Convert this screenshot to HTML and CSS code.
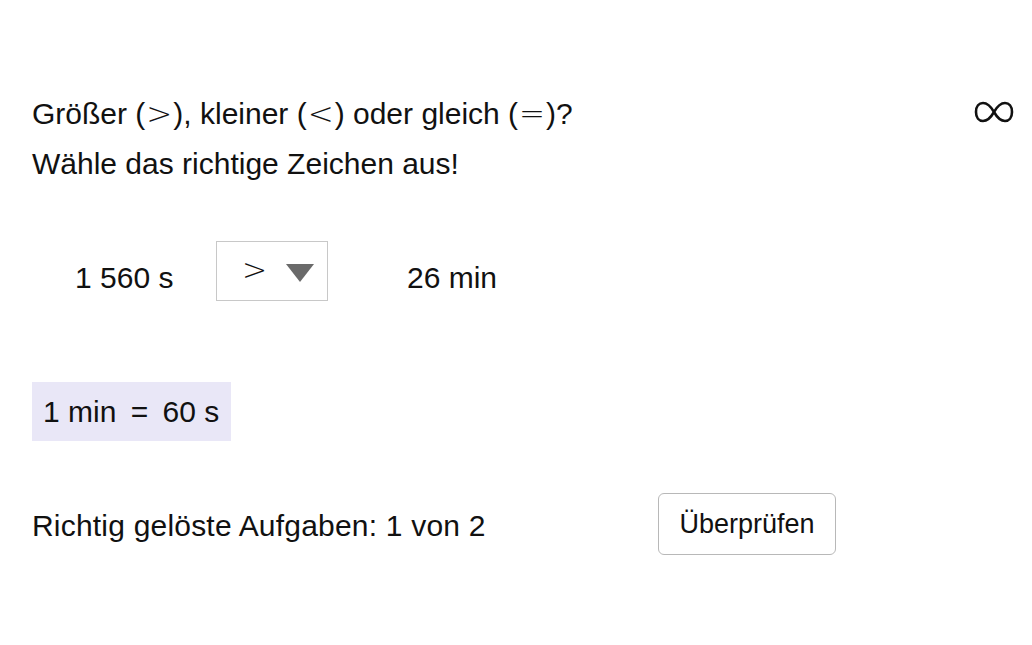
FILE: index.html
```html
<!DOCTYPE html>
<html lang="de">
<head>
<meta charset="utf-8">
<link rel="stylesheet" href="styles.css">
</head>
<body>
<div class="page">
  <div class="header">
    <div class="question">
      <p class="line">Größer (<span class="op">&gt;</span>), kleiner (<span class="op">&lt;</span>) oder gleich (<span class="op">=</span>)?</p>
      <p class="line">Wähle das richtige Zeichen aus!</p>
    </div>
    <svg class="inf" width="40" height="24" viewBox="0 0 40 24"><path d="M20 12 C16 5, 12 3, 9 3 C5 3, 2 6, 2 12 C2 18, 5 21, 9 21 C12 21, 16 19, 20 12 C24 5, 28 3, 31 3 C35 3, 38 6, 38 12 C38 18, 35 21, 31 21 C28 21, 24 19, 20 12 Z" fill="none" stroke="#111" stroke-width="2.6"/></svg>
  </div>
  <div class="task">
    <span class="val left">1 560 s</span>
    <div class="select">
      <span class="sym">&gt;</span>
      <svg class="arrow" width="28" height="18" viewBox="0 0 28 18"><path d="M0 0 H28 L14 18 Z" fill="#6a6a6a"/></svg>
    </div>
    <span class="val right">26 min</span>
  </div>
  <div class="hint">1 min <span class="eq">=</span> 60 s</div>
  <div class="footer">
    <span class="score">Richtig gelöste Aufgaben: 1 von 2</span>
    <button class="check">Überprüfen</button>
  </div>
</div>
</body>
</html>
```
FILE: styles.css
```css
html, body {
  margin: 0;
  padding: 0;
  background: #fff;
}
body {
  font-family: "Liberation Sans", Arial, sans-serif;
  color: #111;
  font-size: 30px;
}
.page {
  padding: 88px 18px 0 32px;
  width: 1032px;
  box-sizing: border-box;
}
.header {
  display: flex;
  justify-content: space-between;
  align-items: flex-start;
}
.line {
  margin: 0;
  line-height: 50px;
}
.op {
  display: inline-block;
  padding: 0 1px;
  font-family: "DejaVu Sans", sans-serif;
  font-weight: 200;
  font-size: 31px;
}
.inf {
  margin-top: 12px;
}
.task {
  display: flex;
  align-items: center;
  margin-top: 52px;
  padding-left: 43px;
  height: 60px;
}
.val {
  margin-top: 14px;
}
.val.left {
  width: 141px;
}
.select {
  width: 112px;
  height: 60px;
  box-sizing: border-box;
  border: 1px solid #c8c8c8;
  display: flex;
  align-items: center;
  padding-left: 25px;
  gap: 19px;
}
.sym {
  font-family: "DejaVu Sans", sans-serif;
  font-weight: 200;
  font-size: 30px;
  margin-top: -3px;
}
.arrow {
  margin-top: 4px;
}
.val.right {
  margin-left: 79px;
}
.hint {
  display: inline-block;
  margin-top: 81px;
  background: #e9e7f7;
  padding: 0 12px 0 11px;
  height: 59px;
  line-height: 59px;
}
.eq {
  display: inline-block;
  padding: 0 6px;
}
.footer {
  display: flex;
  align-items: center;
  margin-top: 52px;
}
.score {
  width: 626px;
  margin-top: 4px;
  letter-spacing: 0.2px;
}
.check {
  font-family: "Liberation Sans", Arial, sans-serif;
  font-size: 27px;
  color: #111;
  background: #fff;
  border: 1px solid #b8b8b8;
  border-radius: 6px;
  width: 178px;
  height: 62px;
}
```
